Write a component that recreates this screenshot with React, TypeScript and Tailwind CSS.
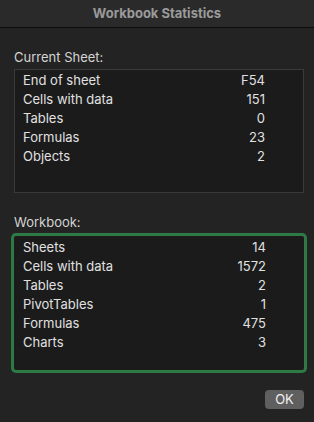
import React from 'react';

const sheetRows = [
  ['End of sheet', 'F54'],
  ['Cells with data', '151'],
  ['Tables', '0'],
  ['Formulas', '23'],
  ['Objects', '2'],
];

const bookRows = [
  ['Sheets', '14'],
  ['Cells with data', '1572'],
  ['Tables', '2'],
  ['PivotTables', '1'],
  ['Formulas', '475'],
  ['Charts', '3'],
];

const StatRows: React.FC<{ rows: string[][] }> = ({ rows }) => (
  <>
    {rows.map(([label, value]) => (
      <div key={label} className="flex justify-between h-[19px] leading-[19px]">
        <span>{label}</span>
        <span>{value}</span>
      </div>
    ))}
  </>
);

export default function App() {
  return (
    <div
      className="w-[314px] h-[422px] bg-[#232323] text-[13px] text-[#e0e0e0] flex flex-col"
      style={{ fontFamily: 'Inter, "Liberation Sans", sans-serif' }}
    >
      <div className="h-[28px] shrink-0 bg-[#2a2a2a] border-b border-[#0c0c0c] flex items-center justify-center">
        <span className="font-bold text-[#9a9a9a]">Workbook Statistics</span>
      </div>

      <div className="pl-[14px] pr-[10px]">
        <div className="mt-[20px] h-[18px] leading-[18px] text-[#d4d4d4]">Current Sheet:</div>
        <div className="mt-[3px] h-[124px] bg-[#1b1b1b] border border-[#3a3a3a] pl-2 pr-[38px] pt-px">
          <StatRows rows={sheetRows} />
        </div>

        <div className="mt-[20px] h-[18px] leading-[18px] text-[#d4d4d4]">Workbook:</div>
        <div className="mt-[5px] h-[134px] bg-[#1b1b1b] rounded-[2px] ring-3 ring-[#2d7a45] pl-[9px] pr-[38px] pt-[2px]">
          <StatRows rows={bookRows} />
        </div>

        <div className="flex justify-end mt-[20px]">
          <button className="w-[39px] h-[19px] rounded-[4px] bg-[#5f5f5f] text-[#f0f0f0] text-[13px] leading-[19px]">
            OK
          </button>
        </div>
      </div>
    </div>
  );
}
